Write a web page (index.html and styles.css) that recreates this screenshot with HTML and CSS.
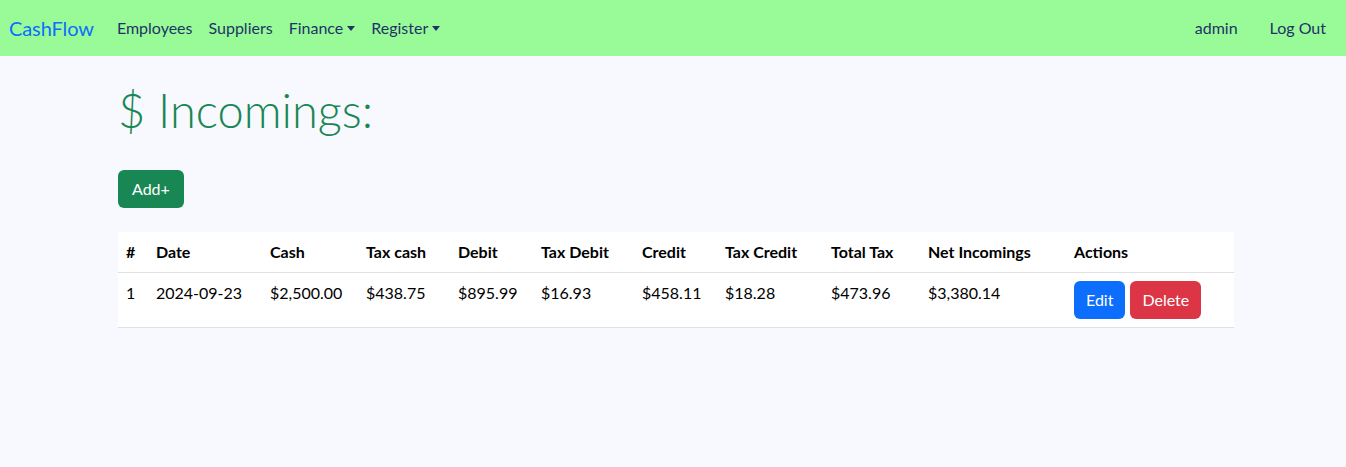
FILE: index.html
```html
<!DOCTYPE html>
<html lang="en">
<head>
<meta charset="utf-8">
<title>CashFlow - Incomings</title>
<link rel="stylesheet" href="styles.css">
</head>
<body>
<nav class="navbar">
  <a class="brand" href="#">CashFlow</a>
  <ul class="nav-links">
    <li><a href="#">Employees</a></li>
    <li><a href="#">Suppliers</a></li>
    <li><a href="#" class="dropdown">Finance</a></li>
    <li><a href="#" class="dropdown">Register</a></li>
  </ul>
  <ul class="nav-right">
    <li><a href="#">admin</a></li>
    <li><a href="#">Log Out</a></li>
  </ul>
</nav>
<main class="container">
  <h1 class="title">$ Incomings:</h1>
  <a href="#" class="btn btn-success">Add+</a>
  <table class="table">
    <colgroup>
      <col class="c-num"><col class="c-date"><col class="c-cash"><col class="c-taxcash"><col class="c-debit"><col class="c-taxdebit"><col class="c-credit"><col class="c-taxcredit"><col class="c-totaltax"><col class="c-net"><col class="c-actions">
    </colgroup>
    <thead>
      <tr>
        <th>#</th><th>Date</th><th>Cash</th><th>Tax cash</th><th>Debit</th><th>Tax Debit</th><th>Credit</th><th>Tax Credit</th><th>Total Tax</th><th>Net Incomings</th><th>Actions</th>
      </tr>
    </thead>
    <tbody>
      <tr>
        <td>1</td><td>2024-09-23</td><td>$2,500.00</td><td>$438.75</td><td>$895.99</td><td>$16.93</td><td>$458.11</td><td>$18.28</td><td>$473.96</td><td>$3,380.14</td>
        <td class="actions"><a href="#" class="btn btn-primary">Edit</a><a href="#" class="btn btn-danger">Delete</a></td>
      </tr>
    </tbody>
  </table>
</main>
</body>
</html>
```
FILE: styles.css
```css
* { box-sizing: border-box; }
body {
  margin: 0;
  background: #f8f9fe;
  font-family: Lato, "Noto Sans", sans-serif;
  font-size: 16px;
  line-height: 1.5;
  color: #000;
}
a { text-decoration: none; }
.navbar {
  height: 56px;
  background: #98fb98;
  display: flex;
  align-items: center;
  padding: 0 12px 0 9px;
}
.brand {
  color: #0d6efd;
  font-size: 20px;
  margin-right: 15px;
  letter-spacing: -0.1px;
}
.nav-links, .nav-right {
  list-style: none;
  margin: 0;
  padding: 0;
  display: flex;
}
.nav-right { margin-left: auto; gap: 16px; }
.nav-links a, .nav-right a {
  display: block;
  padding: 8px 8px;
  color: #1f3366;
}
.dropdown::after {
  content: "";
  display: inline-block;
  margin-left: 4px;
  vertical-align: 3px;
  border-top: 5px solid currentColor;
  border-left: 4px solid transparent;
  border-right: 4px solid transparent;
}
.container {
  width: 1116px;
  margin: 0 0 0 118px;
}
.title {
  margin: 26px 0 32px;
  font-size: 47px;
  font-weight: 300;
  line-height: 1.2;
  color: #198754;
}
.btn {
  display: inline-block;
  padding: 6px 12px;
  border-radius: 6px;
  color: #fff;
  font-size: 16px;
  line-height: 26px;
}
.btn-success { background: #198754; padding: 6px 14px; }
.btn-primary { background: #0d6efd; }
.btn-danger { background: #dc3545; margin-left: 5px; }
.table {
  margin-top: 24px;
  width: 1116px;
  border-collapse: collapse;
  table-layout: fixed;
  background: #fff;
}
.table th, .table td {
  text-align: left;
  vertical-align: top;
  padding: 8px;
  border-bottom: 1px solid #dee2e6;
}
.table th { font-weight: 700; }
.table thead th { vertical-align: bottom; }
.c-num { width: 30px; }
.c-date { width: 114px; }
.c-cash { width: 96px; }
.c-taxcash { width: 92px; }
.c-debit { width: 83px; }
.c-taxdebit { width: 101px; }
.c-credit { width: 83px; }
.c-taxcredit { width: 106px; }
.c-totaltax { width: 97px; }
.c-net { width: 146px; }
.c-actions { width: 168px; }
```
